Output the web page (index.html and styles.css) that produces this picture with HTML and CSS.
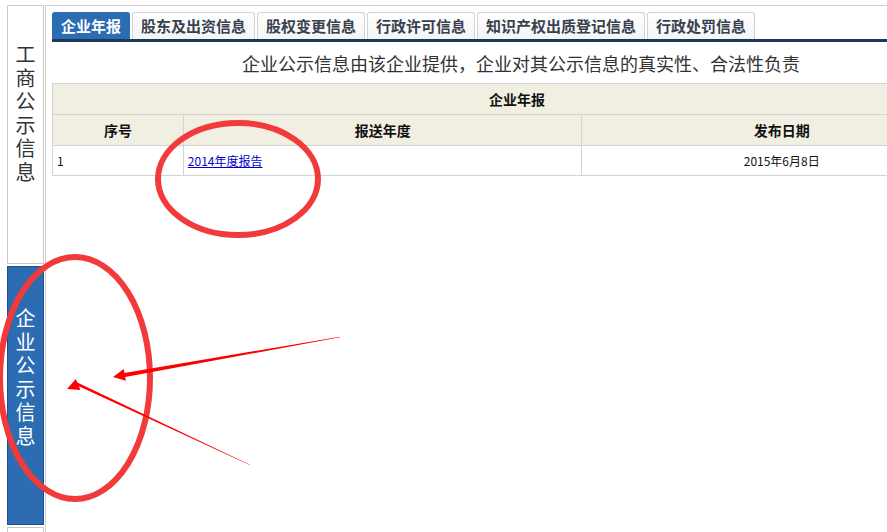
FILE: index.html
```html
<!DOCTYPE html>
<html lang="zh-CN">
<head>
<meta charset="utf-8">
<title>企业公示信息</title>
<link rel="stylesheet" href="styles.css">
</head>
<body>
<div class="page">
  <aside class="side">
    <div class="side-item"><span class="vtext">工商公示信息</span></div>
    <div class="side-item active"><span class="vtext">企业公示信息</span></div>
    <div class="side-item"></div>
  </aside>
  <main class="main">
    <ul class="tabs">
      <li class="tab current">企业年报</li>
      <li class="tab">股东及出资信息</li>
      <li class="tab">股权变更信息</li>
      <li class="tab">行政许可信息</li>
      <li class="tab">知识产权出质登记信息</li>
      <li class="tab">行政处罚信息</li>
    </ul>
    <p class="notice">企业公示信息由该企业提供，企业对其公示信息的真实性、合法性负责</p>
    <table class="report">
      <colgroup>
        <col class="c-no">
        <col class="c-year">
        <col class="c-date">
      </colgroup>
      <tr class="title-row"><th colspan="3">企业年报</th></tr>
      <tr class="head-row"><th>序号</th><th>报送年度</th><th>发布日期</th></tr>
      <tr class="data-row"><td class="left">1</td><td class="left"><a href="#">2014年度报告</a></td><td class="center">2015年6月8日</td></tr>
    </table>
  </main>
  <svg class="marks" width="887" height="532" viewBox="0 0 887 532" xmlns="http://www.w3.org/2000/svg">
    <ellipse cx="238" cy="179" rx="80" ry="56" fill="none" stroke="#f23a3a" stroke-width="6"/>
    <ellipse cx="75" cy="378" rx="75" ry="121" fill="none" stroke="#f23a3a" stroke-width="6"/>
    <polygon fill="#f00" points="340.05,337.3 125.15,376.9 125.9,380.8 113,377 123.7,369 124.45,372.9 339.95,336.7"/>
    <polygon fill="#f00" points="250.12,465.28 78.85,386.25 80.4,390 67,389 75.8,378.9 77.31,382.55 249.88,464.72"/>
  </svg>
</div>
</body>
</html>
```
FILE: styles.css
```css
html, body {
  margin: 0;
  padding: 0;
  background: #fff;
}
body {
  width: 887px;
  height: 532px;
  overflow: hidden;
  font-family: "Noto Sans CJK SC", "Liberation Sans", sans-serif;
  color: #333;
}
.page {
  position: relative;
  box-sizing: border-box;
  display: flex;
  align-items: flex-start;
  padding: 5px 0 0 7px;
  width: 887px;
  height: 532px;
  overflow: hidden;
}
.side {
  width: 37px;
  flex: none;
  display: flex;
  flex-direction: column;
  gap: 2px;
}
.side-item {
  box-sizing: border-box;
  height: 259px;
  border: 1px solid #c9c9c9;
  background: #fff;
  padding-top: 36px;
  display: flex;
  justify-content: center;
}
.side-item.active {
  background: #2b6cb3;
  border-color: #1e4f8c;
  color: #fff;
  padding-top: 39px;
}
.vtext {
  display: block;
  width: 20px;
  font-size: 20px;
  line-height: 23.5px;
  text-align: center;
  word-break: break-all;
}
.main {
  margin-left: 1px;
  border-top: 1px solid #cfcfcf;
  border-left: 1px solid #cfcfcf;
  padding: 6px 0 0 6px;
  width: 944px;
  flex: none;
  height: 540px;
}
.tabs {
  list-style: none;
  margin: 0;
  padding: 0;
  display: flex;
  gap: 2px;
  border-bottom: 3px solid #1b3957;
  height: 27px;
}
.tab {
  box-sizing: border-box;
  height: 27px;
  padding: 0 8px;
  border: 1px solid #cfd3d8;
  border-bottom: none;
  border-radius: 3px 3px 0 0;
  font-size: 15px;
  font-weight: bold;
  line-height: 25px;
  color: #38424f;
  background: linear-gradient(#ffffff, #f3f4f6);
}
.tab.current {
  background: #2b6cb3;
  border-color: #2b6cb3;
  color: #fff;
}
.notice {
  margin: 0;
  width: 930px;
  padding: 2px 0 0 8px;
  box-sizing: border-box;
  line-height: 39px;
  font-size: 18px;
  text-align: center;
  color: #333;
}
.report {
  width: 930px;
  border-collapse: collapse;
  border: 1px solid #d3d3d3;
  font-size: 12px;
}
.c-no { width: 131px; }
.c-year { width: 399px; }
.c-date { width: 400px; }
.report th,
.report td {
  border: 1px solid #d3d3d3;
  padding: 0 4px;
}
.title-row th,
.head-row th {
  height: 30px;
  background: #f0efe2;
  font-size: 14px;
  font-weight: bold;
  color: #111;
  text-align: center;
}
.data-row td {
  height: 29px;
  color: #111;
}
.report td.left { text-align: left; }
.report td.center { text-align: center; }
.report a {
  color: #0000cc;
  text-decoration: underline;
  font-size: 12px;
}
.marks {
  position: absolute;
  left: 0;
  top: 0;
  pointer-events: none;
}
```
